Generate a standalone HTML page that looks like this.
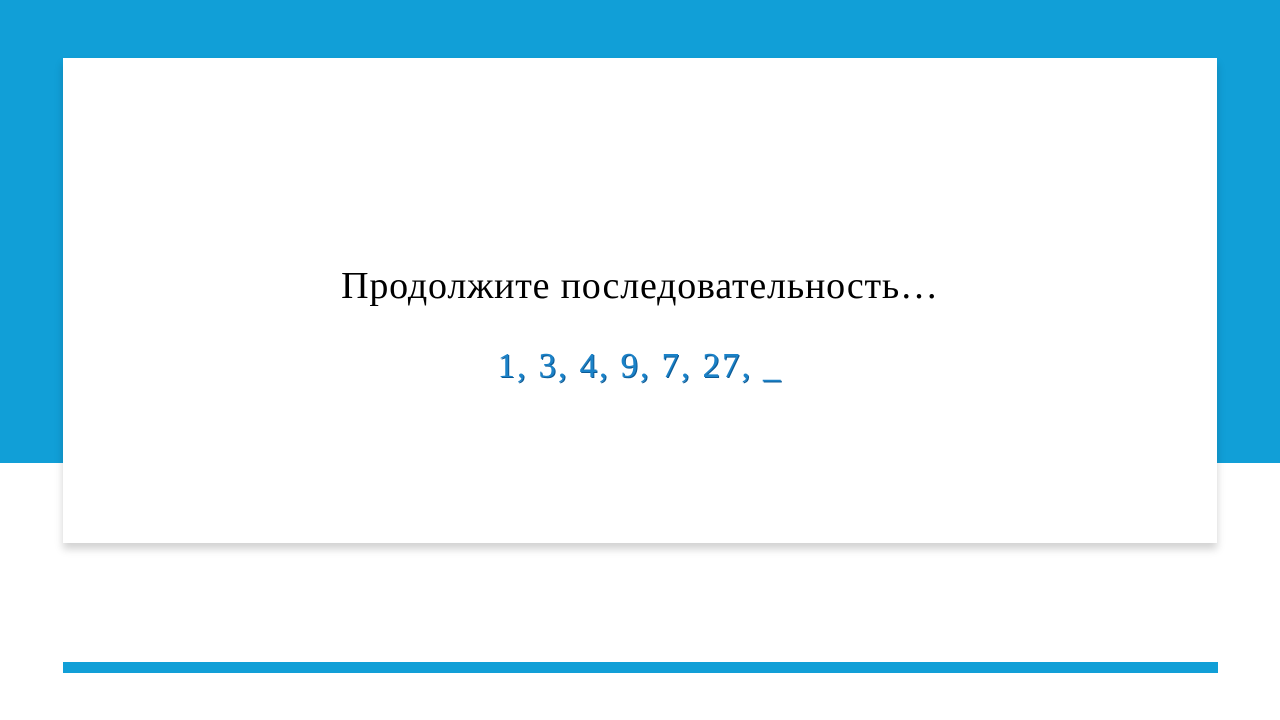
<!DOCTYPE html>
<html><head><meta charset="utf-8"><style>
body{margin:0;width:1280px;height:720px;background:#fff;position:relative;overflow:hidden}
.band{position:absolute;left:0;top:0;width:1280px;height:463px;background:#119fd7}
.card{position:absolute;left:63px;top:58px;width:1154px;height:485px;background:#fff;box-shadow:0 6px 8px rgba(0,0,0,0.18)}
.bar{position:absolute;left:63px;top:662px;width:1155px;height:11px;background:#119fd7}
.t1{position:absolute;left:0;width:1280px;top:264px;text-align:center;font:38px "Liberation Serif",serif;letter-spacing:0.8px;color:#000}
.t2{position:absolute;left:0;width:1280px;top:346px;text-align:center;font:35px "Liberation Serif",serif;letter-spacing:2px;color:#1b82c8;text-shadow:1px 1px 0 #0d5a94}
</style></head><body>
<div class="band"></div><div class="card"></div><div class="bar"></div>
<div class="t1">Продолжите последовательность…</div>
<div class="t2">1, 3, 4, 9, 7, 27, _</div>
</body></html>
